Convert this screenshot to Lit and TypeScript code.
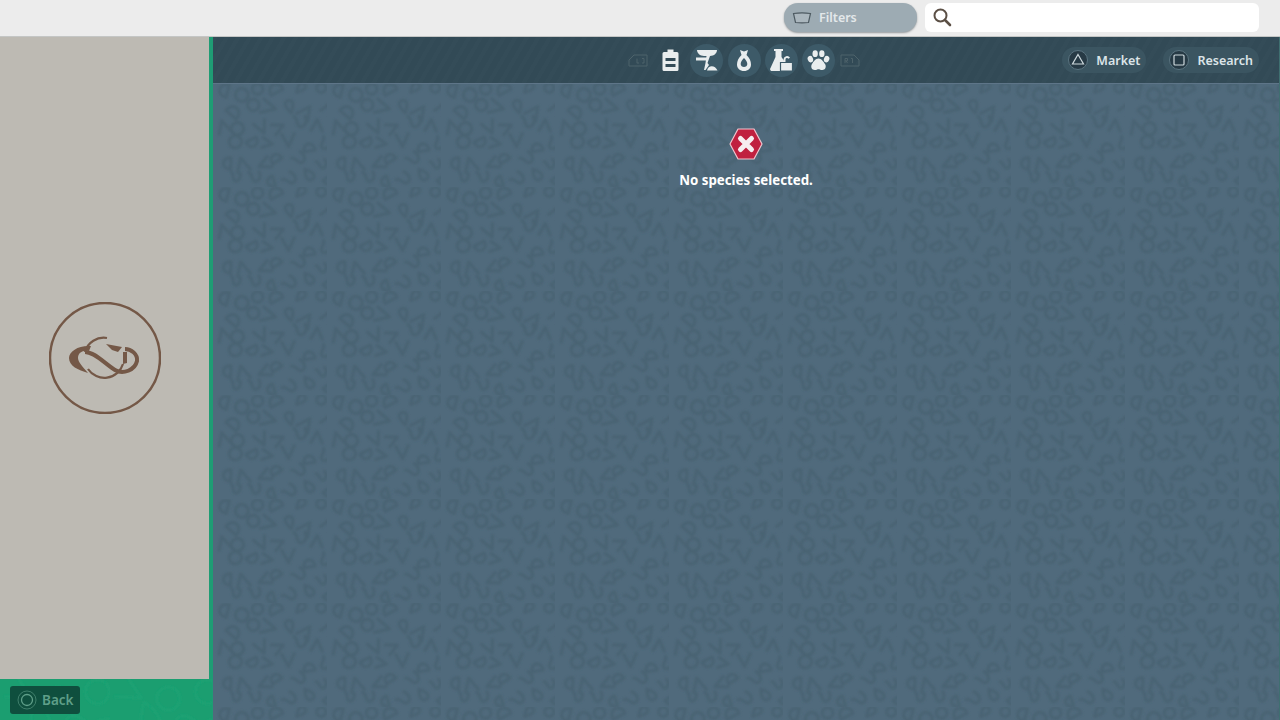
import { LitElement, html, css, unsafeCSS } from "lit";
import { customElement } from "lit/decorators.js";

function makeTile(w: number, h: number, cols: number, rows: number, dark: string, seedStart: number, size: number, sw: number, blur: number) {
  let seed = seedStart;
  const rnd = () => {
    seed = (seed * 1103515245 + 12345) & 0x7fffffff;
    return seed / 0x7fffffff;
  };
  const cw = w / cols;
  const ch = h / rows;
  let out = "";
  for (let r = 0; r < rows; r++) {
    for (let c = 0; c < cols; c++) {
      const x = c * cw + cw / 2 + (r % 2 ? cw / 2 : 0) + (rnd() - 0.5) * cw * 0.5;
      const y = r * ch + ch / 2 + (rnd() - 0.5) * ch * 0.5;
      const a = Math.round(rnd() * 360);
      const k = Math.floor(rnd() * 5);
      const s = size * (0.85 + rnd() * 0.35);
      let d = "";
      if (k === 0) d = `<circle r='${(s * 0.9).toFixed(1)}'/>`;
      if (k === 1) d = `<path d='M${-s} ${-s}L0 ${s}L${s} ${-s}'/>`;
      if (k === 2) d = `<path d='M0 ${-s * 1.1}C${s * 0.7} ${-s * 0.2} ${s} ${s} 0 ${s}C${-s} ${s} ${-s * 0.7} ${-s * 0.2} 0 ${-s * 1.1}Z'/>`;
      if (k === 3) d = `<path d='M${-s} ${-s * 0.6}C0 ${-s * 1.3} ${s} ${-s * 0.6} ${s * 0.6} 0C${s * 0.3} ${s * 0.5} ${-s * 0.4} ${s * 0.3} ${-s * 0.6} ${s}'/>`;
      if (k === 4) d = `<path d='M${-s * 0.7} ${-s}V${s}C${s} ${s} ${s} ${-s} ${-s * 0.7} ${-s}Z'/>`;
      out += `<g transform='translate(${x.toFixed(1)} ${y.toFixed(1)}) rotate(${a})'>${d}</g>`;
    }
  }
  const svgText = `<svg xmlns='http://www.w3.org/2000/svg' width='${w}' height='${h}' viewBox='0 0 ${w} ${h}'><defs><filter id='b'><feGaussianBlur stdDeviation='${blur}'/></filter></defs><g filter='url(#b)' fill='none' stroke='${dark}' stroke-width='${sw}' stroke-linecap='round' stroke-linejoin='round'>${out}</g></svg>`;
  return `url("data:image/svg+xml,${encodeURIComponent(svgText)}")`;
}

const bodyTile = unsafeCSS(makeTile(114, 104, 6, 6, "#4a6373", 7, 6, 3.2, 0.8));
const greenTile = unsafeCSS(makeTile(110, 60, 3, 2, "#1fa375", 11, 12, 2, 0.8));

@customElement("app-root")
export class AppRoot extends LitElement {
  static styles = css`
    :host {
      display: block;
      width: 1280px;
      height: 720px;
      overflow: hidden;
      font-family: "Noto Sans", "Open Sans", sans-serif;
    }
    .page {
      display: grid;
      grid-template-rows: 37px 1fr;
      width: 100%;
      height: 100%;
    }
    .top {
      display: flex;
      align-items: center;
      justify-content: flex-end;
      gap: 8px;
      padding: 0 21px 1px 0;
      background: #ececec;
      border-bottom: 1px solid #c4c6c5;
      box-sizing: border-box;
    }
    .filters {
      display: flex;
      align-items: center;
      gap: 7px;
      width: 133px;
      height: 29px;
      box-sizing: border-box;
      padding-left: 8px;
      border-radius: 14px;
      background: #9dabb3;
      box-shadow: 0 1px 2px rgba(60, 70, 75, 0.5);
      color: #e3e8ea;
      font-size: 12.5px;
      font-weight: 600;
    }
    .search {
      display: flex;
      align-items: center;
      width: 334px;
      height: 29px;
      box-sizing: border-box;
      padding-left: 8px;
      border-radius: 6px;
      background: #fff;
    }
    .main {
      display: grid;
      grid-template-columns: 209px minmax(0, 1fr);
      min-height: 0;
    }
    .side {
      display: grid;
      grid-template-columns: minmax(0, 1fr);
      grid-template-rows: 1fr 41px;
      min-height: 0;
      min-width: 0;
    }
    .logo-area {
      display: flex;
      align-items: center;
      justify-content: center;
      padding-left: 1px;
      background: #bdbab3;
    }
    .back-area {
      display: flex;
      align-items: center;
      padding-left: 10px;
      width: 212px;
      box-sizing: border-box;
      background-color: #1b9e70;
      background-image: ${greenTile};
      position: relative;
      z-index: 1;
    }
    .back {
      display: flex;
      align-items: center;
      gap: 5px;
      width: 70px;
      height: 28px;
      box-sizing: border-box;
      padding-left: 7px;
      border-radius: 3px;
      background: #0f4f3e;
      color: #5f9f89;
      font-size: 13.5px;
      font-weight: 600;
    }
    .content {
      display: grid;
      grid-template-rows: 46px 1fr;
      min-height: 0;
      border-left: 4px solid #1f9c74;
      border-right: 1px solid #3f6f70;
    }
    .tabbar {
      display: flex;
      align-items: center;
      padding: 0 20px 0 0;
      background-color: #324a56;
      background-image: repeating-linear-gradient(
        120deg,
        rgba(255, 255, 255, 0.01) 0 4px,
        transparent 4px 10px
      );
    }
    .tabs {
      display: flex;
      align-items: center;
      height: 38px;
      margin-left: 411px;
    }
    .actions {
      display: flex;
      align-items: center;
      gap: 17px;
      margin-left: auto;
    }
    .tab {
      display: flex;
      align-items: center;
      justify-content: center;
      width: 37.4px;
      height: 37px;
    }
    .tab.on span {
      display: flex;
      align-items: center;
      justify-content: center;
      width: 33px;
      height: 33px;
      border-radius: 50%;
      background: #3d5a68;
    }
    .tab.plain { width: 36px; }
    .bumper { display: flex; width: 28px; justify-content: center; }
    .bumper.right { margin-left: -2px; }
    .pill {
      display: flex;
      align-items: center;
      gap: 8px;
      height: 26px;
      box-sizing: border-box;
      padding: 0 6px;
      border-radius: 13px;
      background: #3b5561;
      color: #dbe4e8;
      font-size: 12.5px;
      font-weight: 600;
    }
    .body {
      display: flex;
      flex-direction: column;
      align-items: center;
      padding-top: 45px;
      background-color: #506a7c;
      background-image: ${bodyTile};
      box-shadow: inset 0 1px 0 #5e7588;
      min-height: 0;
    }
    .msg {
      margin-top: 11px;
      color: #fff;
      font-size: 13.3px;
      line-height: 19px;
      font-weight: 700;
    }
    svg { display: block; }
  `;

  render() {
    return html`<div class="page">
      <div class="top">
        <div class="filters">
          <svg width="20" height="12" viewBox="0 0 20 12" fill="none" stroke="#4d5a61" stroke-width="1.2">
            <path d="M1.5 1.5Q10 .3 18.5 1.5L16.5 10.5Q10 11.3 3.5 10.5Z" fill="#aab6bd" />
          </svg>
          <span>Filters</span>
        </div>
        <div class="search">
          <svg width="19" height="19" viewBox="0 0 19 19" fill="none" stroke="#5b4f45">
            <circle cx="7.5" cy="7.5" r="6" stroke-width="2" />
            <path d="M12 12L17 17" stroke-width="2.6" stroke-linecap="round" />
          </svg>
        </div>
      </div>
      <div class="main">
        <div class="side">
          <div class="logo-area">
            <svg width="112" height="112" viewBox="0 0 112 112" fill="none" stroke="#745847">
              <circle cx="56" cy="56" r="55" stroke-width="2.5" />
              <path d="M36 50a19.5 19.5 0 0 1 22-14M74 62a19.5 19.5 0 0 1-35 5" stroke-width="2.2" />
              <path d="M36 50C46 50 56 62 66 68C74 73 86 68 88 59C89 52 82 47 76 47" stroke-width="4" />
              <path d="M42 44C30 43 20 49 20 56C20 64 29 68 39 71C34 65 29 60 29 56C29 51 33 48 40 49Z" fill="#745847" stroke="none" />
              <path d="M57 42L73 45L69 50L63 48Z" fill="#745847" stroke="none" />
              <path d="M74 50L78 50L78 61L74 62Z" fill="#745847" stroke="none" />
            </svg>
          </div>
          <div class="back-area">
            <div class="back">
              <svg width="20" height="20" viewBox="0 0 20 20" fill="none" stroke="#5f9f89">
                <circle cx="10" cy="10" r="9" stroke-width="1" opacity=".6" />
                <circle cx="10" cy="10" r="5.5" stroke-width="1.3" />
              </svg>
              <span>Back</span>
            </div>
          </div>
        </div>
        <div class="content">
          <div class="tabbar">
            <div class="tabs">
              <div class="bumper">
                <svg width="20" height="13" viewBox="0 0 20 13" fill="none" stroke="#4d626a" stroke-width="1">
                  <path d="M1 12V6l5-5h13v11z" />
                  <path d="M9 4.5v4.5h2M14 4.5h2v4.5h-2" />
                </svg>
              </div>
              <div class="tab plain">
                <svg width="17" height="22" viewBox="0 0 17 22" fill="#e9edee">
                  <path fill-rule="evenodd" d="M2 3h3.5V.5h6V3H15a1.5 1.5 0 0 1 1.500 1.500v16A1.500 1.500 0 0 1 15 22H2A1.500 1.500 0 0 1 .5 20.500v-16A1.500 1.500 0 0 1 2 3zM3.500 9v3h10V9zM3.500 15v3h10v-3z" />
                </svg>
              </div>
              <div class="tab on"><span>
                <svg width="22" height="21" viewBox="0 0 22 21" fill="#e9edee">
                  <path d="M1 0h20c0 3-3 6-7 6H8C4 6 1 3 1 0z" />
                  <path d="M0 7.5h12l-1 3H0z" />
                  <path d="M10.5 6h3.5l-2.5 7 1.5 2-3.5 5L8 20l1.5-7z" />
                  <path d="M11 20.5C12 15 19 14.5 21.5 20.5z" />
                </svg>
              </span></div>
              <div class="tab on"><span>
                <svg width="14" height="21" viewBox="0 0 14 21" fill="#e9edee" fill-rule="evenodd">
                  <path d="M3 0l4 1.5L11 0 9.5 5C12.5 8 14 11 14 14.5 14 18.5 11 21 7 21S0 18.5 0 14.5C0 11 1.5 8 4.5 5z M7 8c-2 2-3.3 4-3.3 6 0 2 1.5 3 3.3 3s3.3-1 3.3-3c0-2-1.3-4-3.3-6z" />
                </svg>
              </span></div>
              <div class="tab on"><span>
                <svg width="23" height="22" viewBox="0 0 23 22" fill="#e9edee">
                  <path d="M4 0h9v2h-1.500v6l4 6H10v8H2C.5 22-.5 20.500.5 19L5.500 8V2H4z" />
                  <path fill-rule="evenodd" d="M10.500 13.500H22.500V22H10.500z" stroke="#3d5a68" stroke-width="1.200" />
                  <path d="M13.500 13V10.500a3.500 3.500 0 0 1 6.500-1.800l-1.700 1a1.500 1.500 0 0 0-2.800.8V13z" />
                </svg>
              </span></div>
              <div class="tab on"><span>
                <svg width="23" height="21" viewBox="0 0 24 22" fill="#e9edee">
                  <ellipse cx="3.5" cy="9.5" rx="2.8" ry="3.5" transform="rotate(-20 3.5 9.5)" />
                  <ellipse cx="8.5" cy="3.8" rx="2.8" ry="3.6" />
                  <ellipse cx="15.5" cy="3.8" rx="2.8" ry="3.6" />
                  <ellipse cx="20.5" cy="9.5" rx="2.8" ry="3.5" transform="rotate(20 20.5 9.5)" />
                  <path d="M12 9c3 0 5 3 7 6 1.5 3 0 6-3 6-1.5 0-3-.8-4-.8S9.500 21 8 21c-3 0-4.500-3-3-6 2-3 4-6 7-6z" />
                </svg>
              </span></div>
              <div class="bumper right">
                <svg width="20" height="13" viewBox="0 0 20 13" fill="none" stroke="#4d626a" stroke-width="1">
                  <path d="M19 12V6l-5-5H1v11z" />
                  <path d="M5 9V4.5h2.500v2.300H5M7.500 9L6 6.800M11 4.500h1.500V9" />
                </svg>
              </div>
            </div>
            <div class="actions">
              <div class="pill">
                <svg width="20" height="20" viewBox="0 0 20 20" fill="none" stroke="#cdd8dc">
                  <circle cx="10" cy="10" r="9.5" fill="#273a45" stroke="#5b7480" />
                  <path d="M10 4.500L15.500 14h-11z" stroke-width="1.200" />
                </svg>
                <span>Market</span>
              </div>
              <div class="pill">
                <svg width="20" height="20" viewBox="0 0 20 20" fill="none" stroke="#cdd8dc">
                  <circle cx="10" cy="10" r="9.5" fill="#273a45" stroke="#5b7480" />
                  <rect x="5" y="5" width="10" height="10" rx="1" stroke-width="1.200" />
                </svg>
                <span>Research</span>
              </div>
            </div>
          </div>
          <div class="body">
            <svg width="34" height="32" viewBox="0 0 34 32">
              <path d="M9 1h16l8 15-8 15H9L1 16z" fill="#c0203f" stroke="#f0c4cd" stroke-width="1.200" stroke-linejoin="round" />
              <path d="M11.500 10.500l11 11M22.500 10.500l-11 11" stroke="#f6eef0" stroke-width="5" stroke-linecap="round" />
            </svg>
            <div class="msg">No species selected.</div>
          </div>
        </div>
      </div>
    </div>`;
  }
}
